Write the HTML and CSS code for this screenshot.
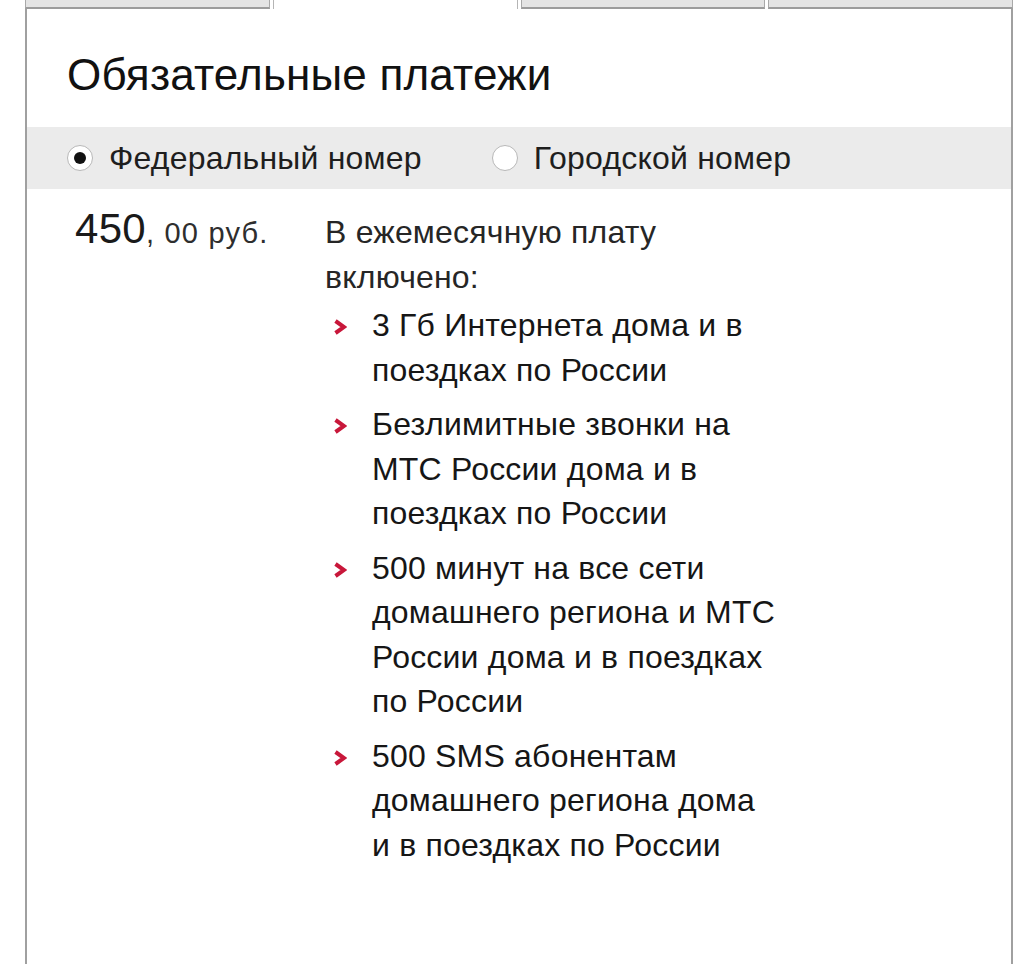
FILE: index.html
```html
<!DOCTYPE html>
<html lang="ru">
<head>
<meta charset="utf-8">
<title>Обязательные платежи</title>
<link rel="stylesheet" href="styles.css">
</head>
<body>
<div class="panel">
  <div class="tabs">
    <div class="tab"></div>
    <div class="tab tab-active"></div>
    <div class="tab"></div>
    <div class="tab"></div>
  </div>
  <div class="box">
    <h2 class="title">Обязательные платежи</h2>
    <div class="band">
      <label class="radio">
        <span class="radio-circle radio-checked"></span>
        <span class="radio-label">Федеральный номер</span>
      </label>
      <label class="radio">
        <span class="radio-circle"></span>
        <span class="radio-label">Городской номер</span>
      </label>
    </div>
    <div class="content">
      <div class="price"><span class="price-big">450</span><span class="price-small">, 00 руб.</span></div>
      <div class="desc">
        <p class="intro">В ежемесячную плату<br>включено:</p>
        <ul class="items">
          <li class="item"><svg class="chev" viewBox="0 0 14 16" width="14" height="16"><polyline points="2.5,2 11,8 2.5,14"/></svg><span>3 Гб Интернета дома и в<br>поездках по России</span></li>
          <li class="item"><svg class="chev" viewBox="0 0 14 16" width="14" height="16"><polyline points="2.5,2 11,8 2.5,14"/></svg><span>Безлимитные звонки на<br>МТС России дома и в<br>поездках по России</span></li>
          <li class="item"><svg class="chev" viewBox="0 0 14 16" width="14" height="16"><polyline points="2.5,2 11,8 2.5,14"/></svg><span>500 минут на все сети<br>домашнего региона и МТС<br>России дома и в поездках<br>по России</span></li>
          <li class="item"><svg class="chev" viewBox="0 0 14 16" width="14" height="16"><polyline points="2.5,2 11,8 2.5,14"/></svg><span>500 SMS абонентам<br>домашнего региона дома<br>и в поездках по России</span></li>
        </ul>
      </div>
    </div>
  </div>
</div>
</body>
</html>
```

FILE: styles.css
```css
html, body {
  margin: 0;
  padding: 0;
  background: #ffffff;
}

body {
  font-family: "Liberation Sans", Arial, sans-serif;
  color: #1a1a1a;
  overflow: hidden;
}

.panel {
  margin-left: 25px;
  width: 988px;
}

.tabs {
  display: flex;
  gap: 3px;
  height: 9px;
}

.tab {
  flex: 1;
  box-sizing: border-box;
  background: #e4e4e4;
  border-left: 1px solid #a9a9a9;
  border-right: 1px solid #a9a9a9;
  border-bottom: 2px solid #9c9c9c;
}

.tab-active {
  background: #ffffff;
  border-bottom: none;
  border-left-color: #b5b5b5;
  border-right-color: #b5b5b5;
}

.box {
  border-left: 2px solid #a0a0a0;
  border-right: 2px solid #a0a0a0;
  min-height: 960px;
}

.title {
  margin: 0;
  height: 118px;
  box-sizing: border-box;
  padding-left: 40px;
  padding-top: 13px;
  display: flex;
  align-items: center;
  font-size: 44px;
  font-weight: normal;
  letter-spacing: 0.2px;
  color: #111111;
}

.band {
  background: #ebebeb;
  height: 62px;
  display: flex;
  align-items: center;
  padding-left: 40px;
  gap: 70px;
}

.radio {
  display: flex;
  align-items: center;
  gap: 16px;
}

.radio-circle {
  width: 24px;
  height: 24px;
  border-radius: 50%;
  border: 1.5px solid #b8b8b8;
  background: #ffffff;
  display: flex;
  align-items: center;
  justify-content: center;
}

.radio-checked::after {
  content: "";
  width: 12px;
  height: 12px;
  border-radius: 50%;
  background: #111111;
}

.radio-label {
  font-size: 32px;
  letter-spacing: 0.2px;
  color: #1e1e1e;
}

.content {
  display: flex;
  align-items: baseline;
  padding-left: 48px;
  padding-top: 16px;
}

.price {
  width: 250px;
  flex-shrink: 0;
  color: #1a1a1a;
}

.price-big {
  font-size: 42px;
  letter-spacing: 0.3px;
}

.price-small {
  font-size: 29px;
  letter-spacing: 1.2px;
  color: #2e2e2e;
}

.desc {
  font-size: 32px;
  line-height: 44.5px;
  letter-spacing: 0.2px;
}

.intro {
  margin: 0;
  color: #262626;
}

.items {
  list-style: none;
  margin: 4px 0 0 0;
  padding: 0;
}

.item {
  display: flex;
  align-items: flex-start;
  color: #161616;
}

.item + .item {
  margin-top: 10px;
}

.chev {
  flex-shrink: 0;
  margin-left: 8px;
  margin-right: 25px;
  margin-top: 16px;
}

.chev polyline {
  fill: none;
  stroke: #c8173a;
  stroke-width: 4;
  stroke-linejoin: miter;
}
```
